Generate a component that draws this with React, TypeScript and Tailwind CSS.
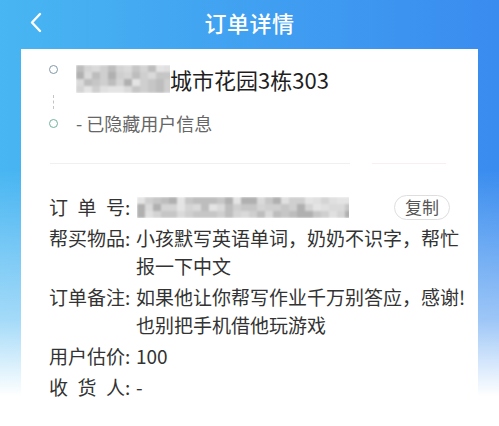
import React from "react";

const shades = [
  "bg-[#dadada]",
  "bg-[#cfcfcf]",
  "bg-[#e4e4e4]",
  "bg-[#bdbdbd]",
  "bg-[#d4d4d4]",
  "bg-[#b0b0b0]",
  "bg-[#e0e0e0]",
  "bg-[#c6c6c6]",
];

function Mosaic({ cols, rows, seed }: { cols: number; rows: number; seed: number }) {
  const cells = [];
  let s = seed;
  for (let i = 0; i < cols * rows; i++) {
    s = (s * 9301 + 49297) % 233280;
    cells.push(shades[Math.floor((s / 233280) * shades.length)]);
  }
  return (
    <div
      className="grid blur-[1px]"
      style={{ gridTemplateColumns: `repeat(${cols}, 8px)` }}
    >
      {cells.map((c, i) => (
        <div key={i} className={`${c} h-[7px] w-[8px]`} />
      ))}
    </div>
  );
}

function Label({ chars }: { chars: string[] }) {
  return (
    <div className="flex w-[87px] shrink-0">
      <span className="flex w-[76px] justify-between">
        {chars.map((c, i) => (
          <span key={i}>{c}</span>
        ))}
      </span>
      <span>:</span>
    </div>
  );
}

const fields = [
  { label: ["帮", "买", "物", "品"], lines: ["小孩默写英语单词，奶奶不识字，帮忙", "报一下中文"] },
  { label: ["订", "单", "备", "注"], lines: ["如果他让你帮写作业千万别答应，感谢!", "也别把手机借他玩游戏"] },
  { label: ["用", "户", "估", "价"], lines: ["100"] },
  { label: ["收", "货", "人"], lines: ["-"] },
];

export default function App() {
  return (
    <div
      className="h-[426px] w-[499px] overflow-hidden bg-[linear-gradient(to_bottom,rgba(255,255,255,0)_40%,rgba(255,255,255,0.5)_75%,#ffffff_93%),linear-gradient(to_right,#48b6f2,#3f9cf1_60%,#3a8cef)]"
      style={{ fontFamily: '"Noto Sans CJK SC", "Noto Sans", sans-serif' }}
    >
      {/* Header */}
      <div className="relative flex h-[49px] items-center justify-center">
        <svg
          className="absolute left-[29px] top-[12px]"
          width="14"
          height="21"
          viewBox="0 0 14 21"
          fill="none"
        >
          <polyline
            points="11,2 3,10.5 11,19"
            stroke="#ffffff"
            strokeWidth="2.4"
            strokeLinecap="round"
            strokeLinejoin="round"
          />
        </svg>
        <h1 className="pb-[5px] text-[22px] font-medium tracking-[0.5px] text-white">订单详情</h1>
      </div>

      {/* Card */}
      <div className="mx-[21px] h-[400px] bg-white pl-[28px] pr-[13px] pt-[15px]">
        {/* Address */}
        <div className="flex h-[30px] items-start">
          <div className="mt-[1px] h-[9px] w-[9px] rounded-full border-[1.5px] border-[#7f99a6]" />
          <div className="ml-[18px] flex h-[30px] items-center">
            <div className="w-[94px] overflow-hidden">
              <Mosaic cols={12} rows={4} seed={7} />
            </div>
            <span className="text-[22px] leading-[30px] text-[#1f1f1f]">城市花园3栋303</span>
          </div>
        </div>
        <div className="flex h-[16px] items-center pl-[4px]">
          <div className="h-[14px] border-l border-dashed border-[#c4c4c4]" />
        </div>
        <div className="flex h-[26px] items-center">
          <div className="h-[9px] w-[9px] rounded-full border-[1.5px] border-[#6fb39a]" />
          <span className="ml-[18px] text-[18px] leading-[26px] text-[#666666]">- 已隐藏用户信息</span>
        </div>

        {/* Divider */}
        <div className="mt-[27px] flex gap-[22px] pl-[1px]">
          <div className="h-[1px] w-[300px] bg-[#f0f0f0]" />
          <div className="h-[1px] w-[74px] bg-[#f8eff4]" />
        </div>

        {/* Order fields */}
        <div className="mt-[29px] flex flex-col gap-[3px] text-[19px] leading-[28px] text-[#333333]">
          <div className="flex items-center">
            <Label chars={["订", "单", "号"]} />
            <div className="ml-[1px] w-[212px] overflow-hidden">
              <Mosaic cols={27} rows={3} seed={3} />
            </div>
            <div className="flex-1" />
            <button className="mr-[15px] flex h-[25px] w-[56px] items-center justify-center rounded-full border border-[#dedede] text-[17px] text-[#555555]">
              复制
            </button>
          </div>
          {fields.map((f, i) => (
            <div key={i} className="flex items-start">
              <Label chars={f.label} />
              <div className="flex flex-col whitespace-nowrap">
                {f.lines.map((l, j) => (
                  <span key={j}>{l}</span>
                ))}
              </div>
            </div>
          ))}
        </div>
      </div>
    </div>
  );
}
